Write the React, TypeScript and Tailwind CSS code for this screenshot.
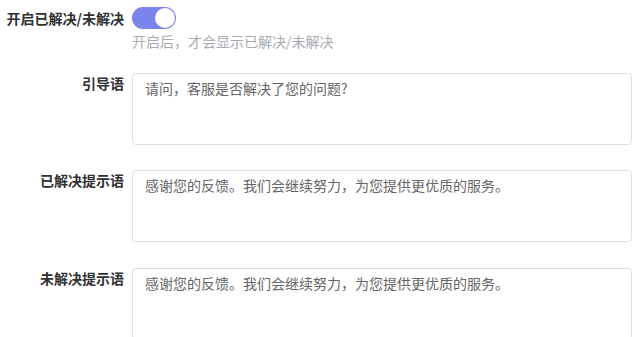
import { useState } from "react";

const font = { fontFamily: '"Noto Sans CJK SC", "Noto Sans", sans-serif' };

function Row({ label, children, className = "" }: { label: string; children: React.ReactNode; className?: string }) {
  return (
    <div className={`flex gap-[8px] ${className}`}>
      <div className="w-[124px] shrink-0 text-right text-[14px] leading-[20px] font-bold text-[#303133]">
        {label}
      </div>
      <div className="w-[500px]">{children}</div>
    </div>
  );
}

function Prompt({ value }: { value: string }) {
  return (
    <textarea
      defaultValue={value}
      className="block h-[72px] w-full resize-none rounded-[4px] border border-[#dcdfe6] bg-white px-[12px] pt-[4px] text-[14px] leading-[20px] text-[#666666] outline-none"
      style={font}
    />
  );
}

export default function App() {
  const [on, setOn] = useState(true);
  const thanks = "感谢您的反馈。我们会继续努力，为您提供更优质的服务。";

  return (
    <div className="min-h-screen bg-white pt-[7px]" style={font}>
      <div className="flex gap-[8px]">
        <div className="w-[124px] shrink-0 text-right text-[14px] leading-[22px] font-bold text-[#303133]">
          开启已解决/未解决
        </div>
        <div>
          <button
            type="button"
            onClick={() => setOn(!on)}
            className={`flex h-[22px] w-[44px] items-center rounded-full px-[1px] ${
              on ? "justify-end bg-[#7b84ec]" : "justify-start bg-[#dcdfe6]"
            }`}
          >
            <span className="h-[20px] w-[20px] rounded-full bg-white" />
          </button>
          <p className="mt-[2px] text-[14px] leading-[20px] text-[#a8abb2]">
            开启后，才会显示已解决/未解决
          </p>
        </div>
      </div>

      <div className="mt-[22px] flex flex-col gap-[25px]">
        <Row label="引导语">
          <Prompt value="请问，客服是否解决了您的问题?" />
        </Row>
        <Row label="已解决提示语">
          <Prompt value={thanks} />
        </Row>
        <Row label="未解决提示语" className="mt-[1px]">
          <Prompt value={thanks} />
        </Row>
      </div>
    </div>
  );
}
